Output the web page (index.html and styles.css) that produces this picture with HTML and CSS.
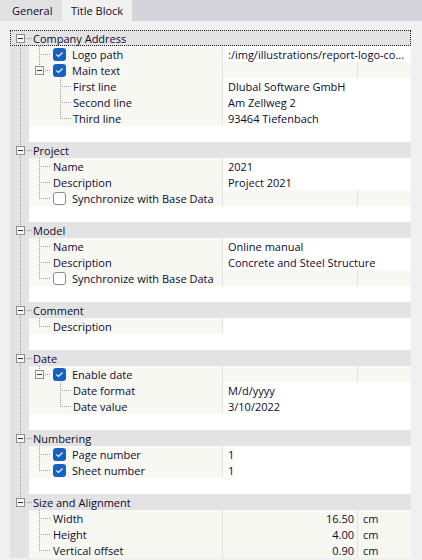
FILE: index.html
```html
<!DOCTYPE html>
<html lang="en">
<head>
  <meta charset="UTF-8">
  <title>Title Block</title>
  <link rel="stylesheet" href="styles.css">
</head>
<body>
  <!-- tabs -->
  <div class="tabs">
    <div class="tab">General</div>
    <div class="tab on">Title Block</div>
  </div>

  <div class="panel">
    <div class="tree">

      <!-- Company Address -->
      <div class="row head focus">
        <div class="gut top"><span class="box"></span></div>
        <div class="hl">Company Address</div>
      </div>
      <div class="row">
        <div class="gut line"></div>
        <div class="name"><span class="g tee"></span><span class="cb"><svg viewBox="0 0 13 13"><polyline points="3.5,6.5 5.5,8.5 9.5,4.5"/></svg></span><span class="lb">Logo path</span></div>
        <div class="val wide">:/img/illustrations/report-logo-co...</div>
      </div>
      <div class="row">
        <div class="gut line"></div>
        <div class="name"><span class="g elbow"><span class="box"></span></span><span class="cb open"><svg viewBox="0 0 13 13"><polyline points="3.5,6.5 5.5,8.5 9.5,4.5"/></svg></span><span class="lb">Main text</span></div>
        <div class="val soft"></div>
        <div class="unit"></div>
      </div>
      <div class="row">
        <div class="gut line"></div>
        <div class="name"><span class="g"></span><span class="g sub tee"></span><span class="t2">First line</span></div>
        <div class="val wide">Dlubal Software GmbH</div>
      </div>
      <div class="row">
        <div class="gut line"></div>
        <div class="name"><span class="g"></span><span class="g sub tee"></span><span class="t2">Second line</span></div>
        <div class="val wide">Am Zellweg 2</div>
      </div>
      <div class="row">
        <div class="gut line"></div>
        <div class="name"><span class="g"></span><span class="g sub elbow"></span><span class="t2">Third line</span></div>
        <div class="val wide">93464 Tiefenbach</div>
      </div>
      <div class="row blank"><div class="gut line"></div><div class="fill"></div></div>

      <!-- Project -->
      <div class="row head">
        <div class="gut mid"><span class="box"></span></div>
        <div class="hl">Project</div>
      </div>
      <div class="row">
        <div class="gut line"></div>
        <div class="name"><span class="g tee"></span><span class="txt">Name</span></div>
        <div class="val wide">2021</div>
      </div>
      <div class="row">
        <div class="gut line"></div>
        <div class="name"><span class="g tee"></span><span class="txt">Description</span></div>
        <div class="val wide">Project 2021</div>
      </div>
      <div class="row">
        <div class="gut line"></div>
        <div class="name"><span class="g elbow"></span><span class="cb off"></span><span class="lb">Synchronize with Base Data</span></div>
        <div class="val soft"></div>
        <div class="unit"></div>
      </div>
      <div class="row blank"><div class="gut line"></div><div class="fill"></div></div>

      <!-- Model -->
      <div class="row head">
        <div class="gut mid"><span class="box"></span></div>
        <div class="hl">Model</div>
      </div>
      <div class="row">
        <div class="gut line"></div>
        <div class="name"><span class="g tee"></span><span class="txt">Name</span></div>
        <div class="val wide">Online manual</div>
      </div>
      <div class="row">
        <div class="gut line"></div>
        <div class="name"><span class="g tee"></span><span class="txt">Description</span></div>
        <div class="val wide">Concrete and Steel Structure</div>
      </div>
      <div class="row">
        <div class="gut line"></div>
        <div class="name"><span class="g elbow"></span><span class="cb off"></span><span class="lb">Synchronize with Base Data</span></div>
        <div class="val soft"></div>
        <div class="unit"></div>
      </div>
      <div class="row blank"><div class="gut line"></div><div class="fill"></div></div>

      <!-- Comment -->
      <div class="row head">
        <div class="gut mid"><span class="box"></span></div>
        <div class="hl">Comment</div>
      </div>
      <div class="row">
        <div class="gut line"></div>
        <div class="name"><span class="g elbow"></span><span class="txt">Description</span></div>
        <div class="val wide"></div>
      </div>
      <div class="row blank"><div class="gut line"></div><div class="fill"></div></div>

      <!-- Date -->
      <div class="row head">
        <div class="gut mid"><span class="box"></span></div>
        <div class="hl">Date</div>
      </div>
      <div class="row">
        <div class="gut line"></div>
        <div class="name"><span class="g elbow"><span class="box"></span></span><span class="cb open"><svg viewBox="0 0 13 13"><polyline points="3.5,6.5 5.5,8.5 9.5,4.5"/></svg></span><span class="lb">Enable date</span></div>
        <div class="val soft"></div>
        <div class="unit"></div>
      </div>
      <div class="row">
        <div class="gut line"></div>
        <div class="name"><span class="g"></span><span class="g sub tee"></span><span class="t2">Date format</span></div>
        <div class="val wide">M/d/yyyy</div>
      </div>
      <div class="row">
        <div class="gut line"></div>
        <div class="name"><span class="g"></span><span class="g sub elbow"></span><span class="t2">Date value</span></div>
        <div class="val wide">3/10/2022</div>
      </div>
      <div class="row blank"><div class="gut line"></div><div class="fill"></div></div>

      <!-- Numbering -->
      <div class="row head">
        <div class="gut mid"><span class="box"></span></div>
        <div class="hl">Numbering</div>
      </div>
      <div class="row">
        <div class="gut line"></div>
        <div class="name"><span class="g tee"></span><span class="cb"><svg viewBox="0 0 13 13"><polyline points="3.5,6.5 5.5,8.5 9.5,4.5"/></svg></span><span class="lb">Page number</span></div>
        <div class="val wide">1</div>
      </div>
      <div class="row">
        <div class="gut line"></div>
        <div class="name"><span class="g elbow"></span><span class="cb"><svg viewBox="0 0 13 13"><polyline points="3.5,6.5 5.5,8.5 9.5,4.5"/></svg></span><span class="lb">Sheet number</span></div>
        <div class="val wide">1</div>
      </div>
      <div class="row blank"><div class="gut line"></div><div class="fill"></div></div>

      <!-- Size and Alignment -->
      <div class="row head">
        <div class="gut end"><span class="box"></span></div>
        <div class="hl">Size and Alignment</div>
      </div>
      <div class="row">
        <div class="gut"></div>
        <div class="name"><span class="g tee"></span><span class="txt">Width</span></div>
        <div class="val soft num">16.50</div>
        <div class="unit">cm</div>
      </div>
      <div class="row">
        <div class="gut"></div>
        <div class="name"><span class="g tee"></span><span class="txt">Height</span></div>
        <div class="val soft num">4.00</div>
        <div class="unit">cm</div>
      </div>
      <div class="row">
        <div class="gut"></div>
        <div class="name"><span class="g elbow"></span><span class="txt">Vertical offset</span></div>
        <div class="val soft num">0.90</div>
        <div class="unit">cm</div>
      </div>

    </div>
  </div>
</body>
</html>
```

FILE: styles.css
```css
/* reset */
* {
  margin: 0;
  padding: 0;
  box-sizing: border-box;
}

:root {
  --vdots: repeating-linear-gradient(to bottom, #a0a0a0 0 1px, transparent 1px 2px);
  --hdots: repeating-linear-gradient(to right, #a0a0a0 0 1px, transparent 1px 2px);
}

body {
  background: #f0f0f0;
  color: #0c0c30;
  font-family: "Open Sans", "Noto Sans", sans-serif;
  font-size: 11px;
  line-height: 16px;
  overflow: hidden;
}

/* tab strip */
.tabs {
  display: flex;
  height: 21px;
  background: #d4d4da;
}
.tab {
  width: 62px;
  padding: 1px 0 0 12px;
  line-height: 20px;
  white-space: nowrap;
  background: #e1e1e1;
}
.tab.on {
  width: 70px;
  padding-left: 9px;
  background: #f0f0f0;
}

/* property tree */
.panel {
  padding: 9px 11px 0 10px;
}
.tree {
  width: 401px;
}
.row {
  display: flex;
  height: 16px;
  white-space: nowrap;
  overflow: hidden;
}
.head {
  background: #e3e3e3;
}
.focus {
  outline: 1px dotted #222;
  outline-offset: -1px;
}

/* left gutter with the section lines */
.gut {
  width: 19px;
  flex: none;
  display: flex;
  align-items: center;
  background-color: #e3e3e3;
  background-repeat: no-repeat;
}
.gut.line {
  background-image: var(--vdots);
  background-size: 1px 100%;
  background-position: 10px 0;
}
.gut.top,
.gut.mid,
.gut.end {
  background-image: var(--vdots), var(--hdots);
  background-position: 10px 8px, 10px 8px;
  background-size: 1px 8px, 9px 1px;
}
.gut.mid {
  background-position: 10px 0, 10px 8px;
  background-size: 1px 100%, 9px 1px;
}
.gut.end {
  background-position: 10px 0, 10px 8px;
  background-size: 1px 9px, 9px 1px;
}

/* expander box */
.box {
  width: 9px;
  height: 9px;
  margin-left: 6px;
  border: 1px solid #8e8e8e;
  background: #f7f7f7 linear-gradient(#333, #333) no-repeat center / 5px 1px;
}

.hl {
  flex: 1;
  padding: 1px 0 0 4px;
  background: var(--hdots) no-repeat 0 8px / 3px 1px;
}

/* name column */
.name {
  width: 193px;
  flex: none;
  display: flex;
  align-items: center;
  background: #f8f8f2;
  overflow: hidden;
}
.g {
  --x: 10px;
  width: 22px;
  height: 16px;
  flex: none;
  display: flex;
  align-items: center;
  background-repeat: no-repeat;
}
.g.sub {
  --x: 9px;
}
.g.tee,
.g.elbow {
  background-image: var(--vdots), var(--hdots);
  background-position: var(--x) 0, var(--x) 8px;
  background-size: 1px 100%, 12px 1px;
}
.g.elbow {
  background-size: 1px 9px, 12px 1px;
}
.txt,
.lb,
.t2 {
  align-self: stretch;
  padding-top: 1px;
}
.txt {
  margin-left: 2px;
}
.lb {
  margin-left: 6px;
}

/* checkbox */
.cb {
  width: 13px;
  height: 13px;
  flex: none;
  margin-left: 2px;
  border-radius: 3px;
  background: #1661c2;
}
.cb svg {
  display: block;
  width: 13px;
  height: 13px;
  fill: none;
  stroke: #fff;
  stroke-width: 1.1;
}
.cb.off {
  background: #fff;
  border: 1px solid #8a8a8a;
}

/* value columns */
.val {
  width: 135px;
  flex: none;
  padding: 1px 0 0 5px;
  border-left: 1px solid #e2e2e2;
  background: #fff;
  overflow: hidden;
}
.val.wide {
  width: 189px;
}
.val.soft {
  background: #f8f8f2;
}
.val.num {
  padding-right: 3px;
  text-align: right;
}
.unit {
  width: 54px;
  flex: none;
  padding: 1px 0 0 5px;
  border-left: 1px solid #e2e2e2;
  background: #f8f8f2;
}
.fill {
  flex: 1;
  background: #fff;
}
```
